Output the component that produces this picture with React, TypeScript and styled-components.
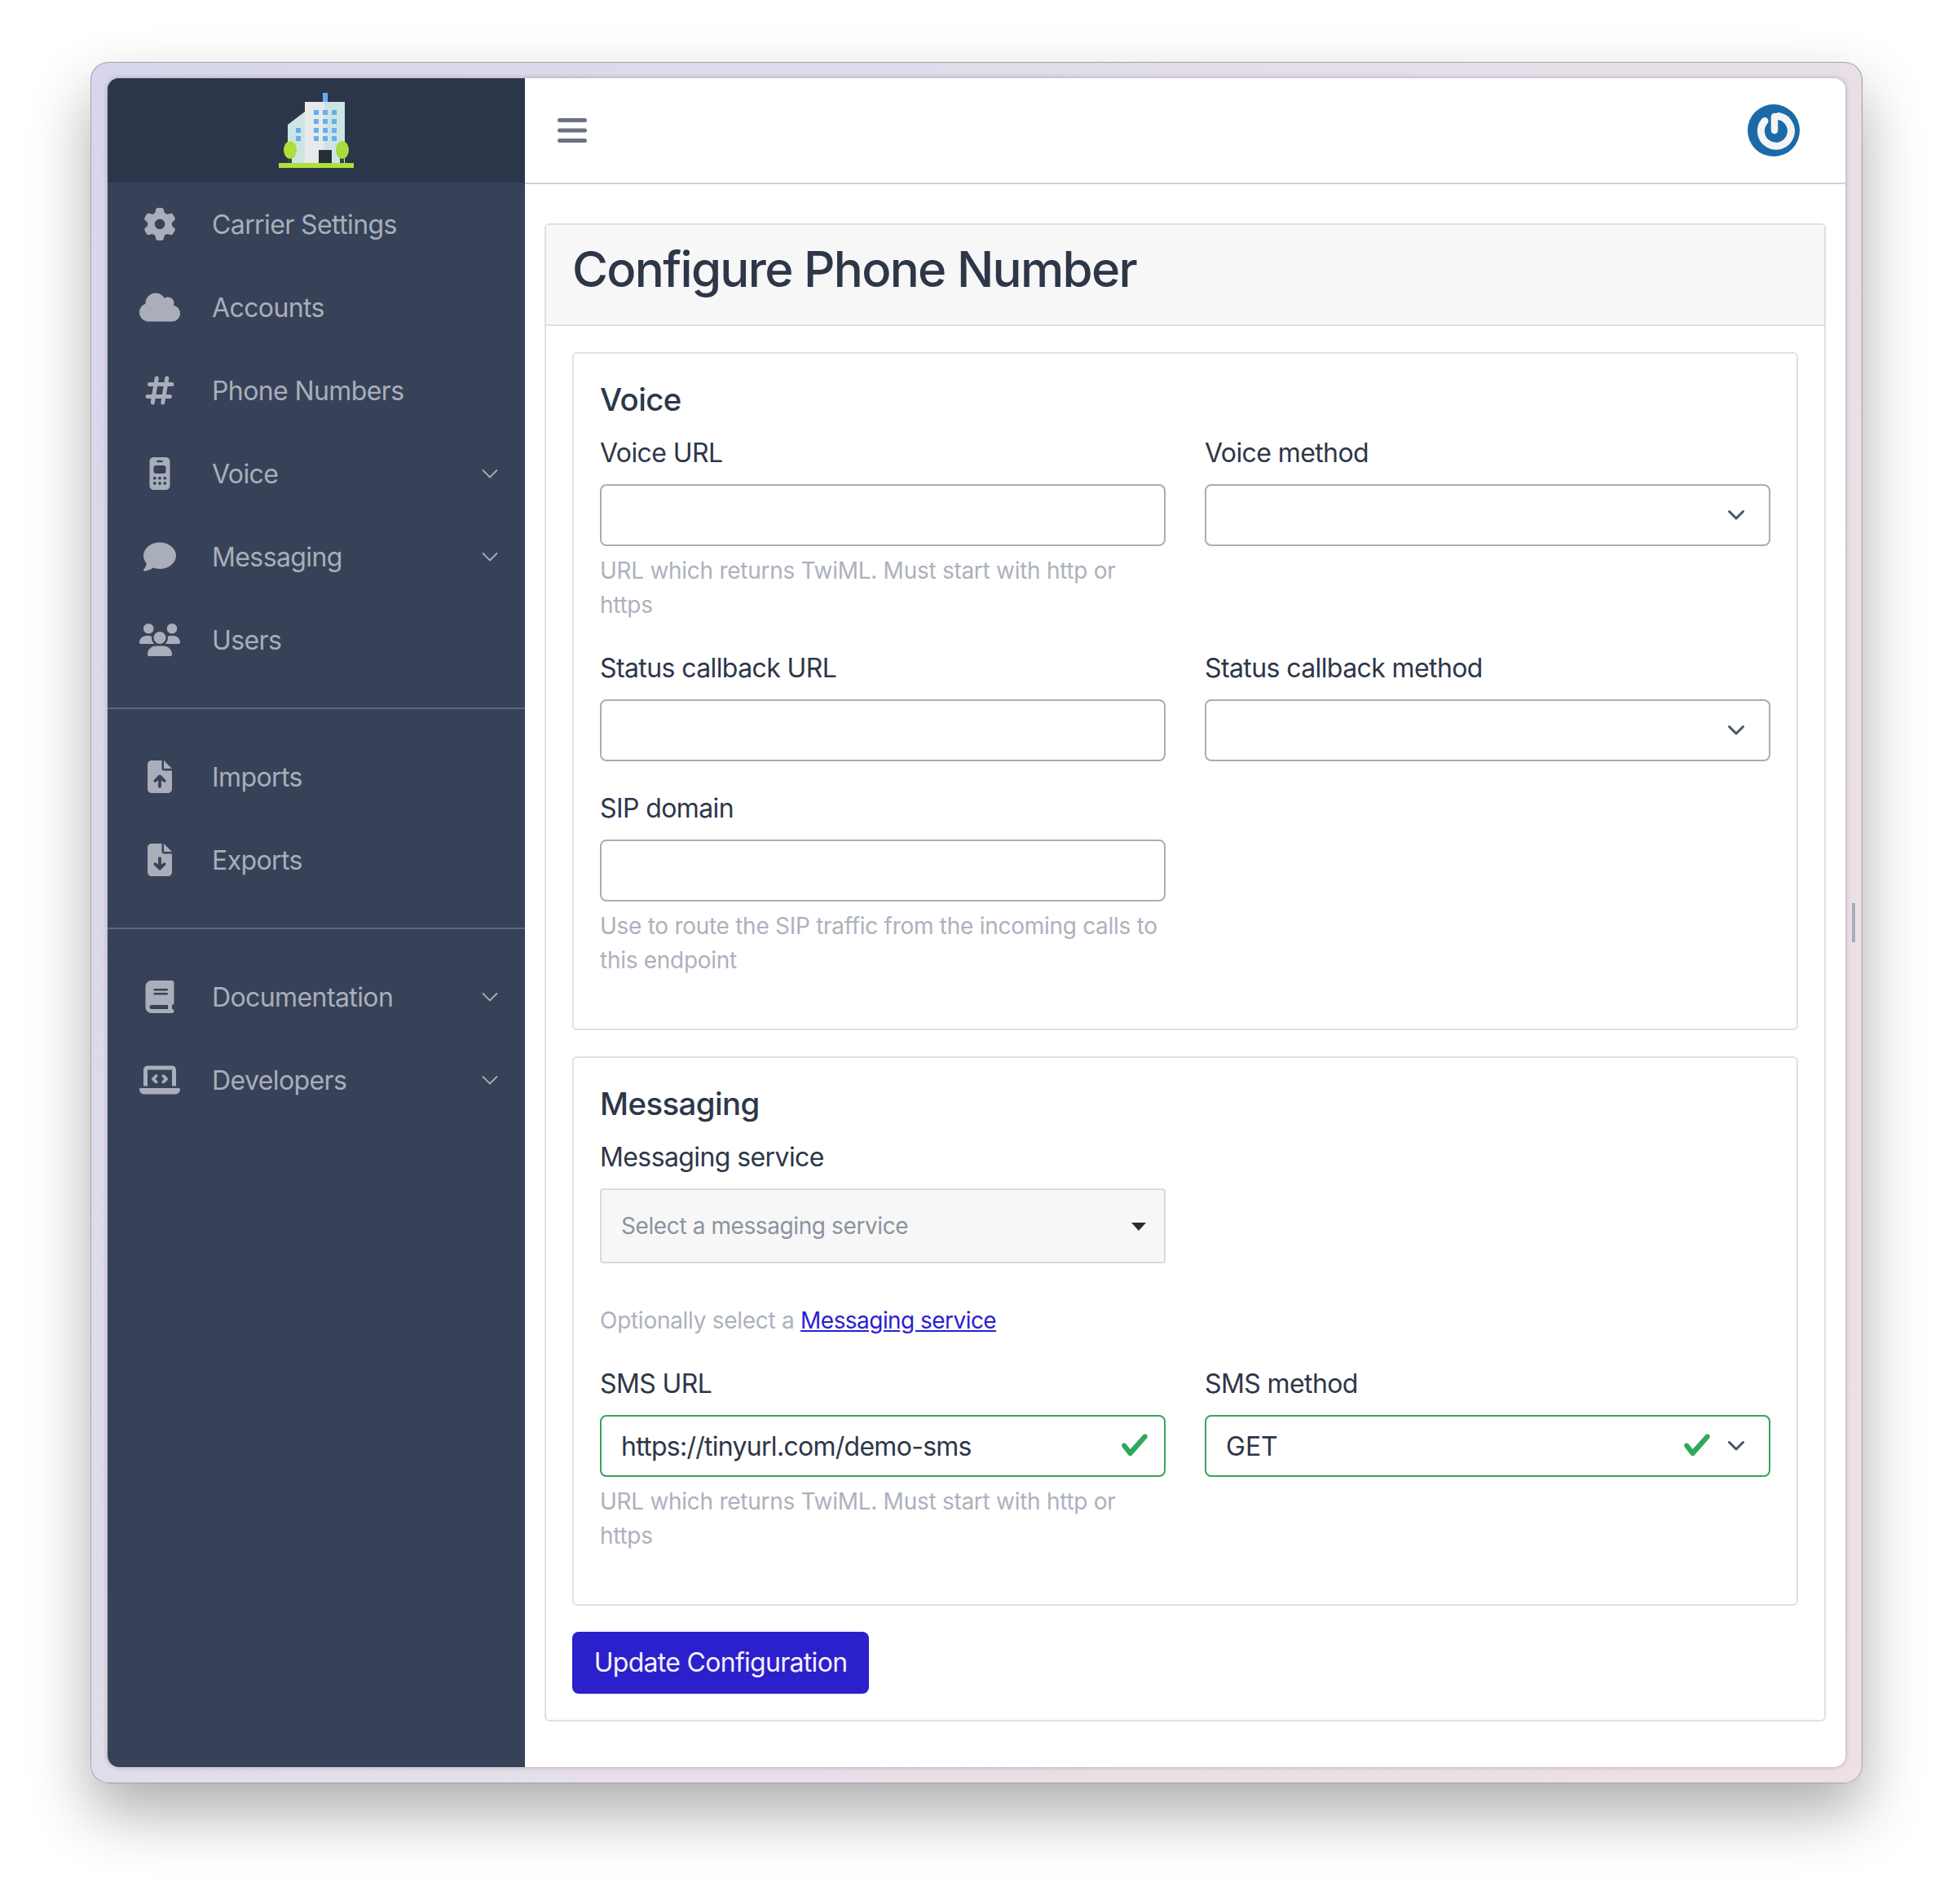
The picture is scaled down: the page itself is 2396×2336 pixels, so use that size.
import React from 'react'
import styled, { createGlobalStyle } from 'styled-components'
import {
  FaBook,
  FaCloud,
  FaComment,
  FaFileArrowDown,
  FaFileArrowUp,
  FaGear,
  FaHashtag,
  FaLaptopCode,
  FaMobileRetro,
  FaUsers
} from 'react-icons/fa6'

const GlobalStyle = createGlobalStyle`
  html, body {
    margin: 0;
    background: #fff;
  }
  * {
    box-sizing: border-box;
  }
`

const Page = styled.div`
  padding: 76px 111px 148px;
  font-family: Inter, 'Noto Sans', sans-serif;
  font-size: 32px;
  line-height: 48px;
  letter-spacing: -0.6px;
  color: #2d3748;
`
const Frame = styled.div`
  position: relative;
  padding: 19px 20px;
  height: 2112px;
  border-radius: 22px;
  border: 1px solid rgba(90, 90, 90, 0.45);
  background: linear-gradient(120deg, #d8d6ec 0%, #e5dfe9 50%, #efe0e3 100%);
  box-shadow: 0 36px 76px rgba(0, 0, 0, 0.32);
`
const ResizeHandle = styled.div`
  position: absolute;
  top: 1031px;
  right: 8px;
  width: 4px;
  height: 48px;
  background: #a9adb8;
`
const Shell = styled.div`
  display: flex;
  height: 2072px;
  border-radius: 14px;
  overflow: hidden;
  background: #fff;
  box-shadow: 0 0 6px rgba(0, 0, 0, 0.25);
`
const Sidebar = styled.aside`
  flex: 0 0 512px;
  background: #374258;
`
const Brand = styled.div`
  display: flex;
  align-items: center;
  justify-content: center;
  height: 128px;
  background: #2c364a;
`
const NavDivider = styled.div`
  height: 2px;
  margin: 32px 0;
  background: #5d6678;
`
const NavItem = styled.div`
  display: flex;
  align-items: center;
  height: 102px;
  padding: 0 33px 0 39px;
  color: #a9aeba;
`
const NavIcon = styled.span<{ $wide?: boolean }>`
  display: flex;
  flex: 0 0 50px;
  justify-content: center;
  margin-right: 39px;

  svg {
    width: ${props => (props.$wide ? '50px' : '40px')};
    height: 40px;
  }
`
const NavLabel = styled.span`
  flex: 1;
  padding-top: 2px;
`
const Main = styled.main`
  flex: 1;
  min-width: 0;
`
const TopBar = styled.header`
  display: flex;
  align-items: center;
  justify-content: space-between;
  height: 130px;
  padding: 0 56px 0 40px;
  border-bottom: 2px solid #cdd0d6;
`
const Content = styled.div`
  padding: 48px 24px 0;
`
const Card = styled.section`
  border: 2px solid #dfdfe4;
  border-radius: 6px;
`
const CardHeader = styled.div`
  height: 124px;
  padding: 0 32px;
  background: #f7f7f7;
  border-bottom: 2px solid #dfdfe4;
`
const Title = styled.h3`
  margin: 0;
  font-size: 60px;
  line-height: 108px;
  font-weight: 500;
  letter-spacing: -1.7px;
`
const CardBody = styled.div`
  padding: 32px;
`
const Section = styled.fieldset`
  margin: 0 0 32px;
  padding: 32px;
  border: 2px solid #dfdfe4;
  border-radius: 6px;
`
const SectionTitle = styled.h5`
  margin: 0 0 16px;
  font-size: 38.4px;
  line-height: 48px;
  font-weight: 500;
`
const FormRow = styled.div`
  display: grid;
  grid-template-columns: 1fr 1fr;
  column-gap: 48px;
`
const Group = styled.div`
  position: relative;
  margin-bottom: 32px;
`
const Label = styled.label`
  display: block;
  padding-top: 2px;
  margin-bottom: 14px;
`
const TextInput = styled.input<{ $valid?: boolean }>`
  display: block;
  width: 100%;
  height: 76px;
  padding: 1px 24px 0;
  border: 2px solid ${props => (props.$valid ? '#38a25f' : '#a9adb8')};
  border-radius: 8px;
  background: #fff;
  outline: none;
  font: inherit;
  letter-spacing: -0.72px;
  color: #2d3748;
`
const SelectInput = styled.select<{ $valid?: boolean }>`
  display: block;
  width: 100%;
  height: 76px;
  padding: 2px 24px 0;
  appearance: none;
  border: 2px solid ${props => (props.$valid ? '#38a25f' : '#a9adb8')};
  border-radius: 8px;
  background: #fff;
  outline: none;
  font: inherit;
  letter-spacing: 0;
  color: #2d3748;
`
const FieldBox = styled.div`
  position: relative;
`
const FieldChevron = styled.svg`
  position: absolute;
  top: 31px;
  right: 31px;
  width: 22px;
  height: 14px;
`
const FieldCheck = styled.svg<{ $right: number }>`
  position: absolute;
  top: 19px;
  right: ${props => props.$right}px;
  width: 36px;
  height: 36px;
`
const Help = styled.div`
  margin: 8px 0 -1px;
  padding-top: 1px;
  font-size: 28px;
  line-height: 42px;
  letter-spacing: -0.28px;
  color: #adb1be;
`
const HelpLink = styled.a`
  color: #2a1fd0;
  letter-spacing: -0.55px;
  text-decoration: underline;
`
const ComboBox = styled.div`
  position: relative;
  display: flex;
  align-items: center;
  height: 92px;
  margin-bottom: 48px;
  padding: 0 24px;
  border: 2px solid #dadadf;
  border-radius: 4px;
  background: #f7f7f7;
  font-size: 28px;
  letter-spacing: -0.4px;
  color: #8b939f;
`
const Caret = styled.span`
  position: absolute;
  top: 40px;
  right: 22px;
  border-top: 10px solid #263033;
  border-left: 9px solid transparent;
  border-right: 9px solid transparent;
`
const SubmitButton = styled.button`
  display: block;
  width: 364px;
  height: 76px;
  padding: 0;
  border: 0;
  border-radius: 8px;
  background: #2c1fcc;
  color: #f2f1fc;
  font: inherit;
  letter-spacing: -0.7px;
`

const Chevron = () => (
  <svg width='20' height='12' viewBox='0 0 20 12' fill='none' stroke='#a9aeba' strokeWidth='1.8'>
    <path d='M1 1.5l9 9 9-9' />
  </svg>
)

const SelectChevron = () => (
  <FieldChevron viewBox='0 0 22 14' fill='none' stroke='#4a5568' strokeWidth='3' strokeLinecap='round' strokeLinejoin='round'>
    <path d='M2.5 2.5L11 11l8.5-8.5' />
  </FieldChevron>
)

const Check = ({ right }: { right: number }) => (
  <FieldCheck $right={right} viewBox='0 0 8 8' fill='#30a85a'>
    <path d='M2.3 6.73L.6 4.53c-.4-1.04.46-1.4 1.1-.8l1.1 1.4 3.4-3.8c.6-.63 1.6-.27 1.2.7l-4 4.6c-.43.5-.8.4-1.1.1z' />
  </FieldCheck>
)

const Hamburger = () => (
  <svg width='36' height='36' viewBox='0 0 36 36' fill='#6b7280'>
    <rect x='0' y='3' width='36' height='5' rx='2.5' />
    <rect x='0' y='15.5' width='36' height='5' rx='2.5' />
    <rect x='0' y='28' width='36' height='5' rx='2.5' />
  </svg>
)

const PowerLogo = () => (
  <svg width='64' height='64' viewBox='0 0 64 64'>
    <circle cx='32' cy='32' r='32' fill='#1a6aa9' />
    <path
      d='M21 20.5A18.5 18.5 0 1 0 38 14.5'
      fill='none'
      stroke='#f4f4f6'
      strokeWidth='9'
      strokeLinecap='round'
    />
    <path d='M33 15v17' fill='none' stroke='#f4f4f6' strokeWidth='8.5' strokeLinecap='round' />
  </svg>
)

const buildingWindows = [
  [46, 24], [57, 24], [68, 24],
  [46, 35], [57, 35], [68, 35],
  [46, 46], [57, 46], [68, 46], [24, 46],
  [46, 56], [57, 56], [68, 56], [24, 56]
]

const BuildingLogo = () => (
  <svg width='92' height='92' viewBox='0 0 92 92'>
    <rect x='54' y='0' width='6' height='12' fill='#63b0ee' />
    <path d='M11 86V39l21-16V86z' fill='#cde4e4' />
    <rect x='32' y='11' width='49' height='75' fill='#cde4e4' />
    <rect x='32' y='11' width='24' height='75' fill='#e6eaea' />
    {buildingWindows.map(([x, y]) => (
      <rect key={`${x}-${y}`} x={x - 3} y={y - 3} width='6' height='6' fill='#68aeee' />
    ))}
    <rect x='49' y='70' width='16' height='17' fill='#262f38' />
    <rect x='11' y='80' width='5' height='8' fill='#3b3f44' />
    <rect x='75' y='80' width='5' height='8' fill='#3b3f44' />
    <ellipse cx='14' cy='70' rx='8' ry='11' fill='#aee03a' />
    <ellipse cx='78' cy='70' rx='8' ry='11' fill='#a8dc3c' />
    <rect x='0' y='86' width='92' height='6' fill='#aee03a' />
  </svg>
)

type NavEntry = { label: string; icon: React.ReactNode; wide?: boolean; more?: boolean }

const topNav: NavEntry[] = [
  { label: 'Carrier Settings', icon: <FaGear /> },
  { label: 'Accounts', icon: <FaCloud />, wide: true },
  { label: 'Phone Numbers', icon: <FaHashtag /> },
  { label: 'Voice', icon: <FaMobileRetro />, more: true },
  { label: 'Messaging', icon: <FaComment />, more: true },
  { label: 'Users', icon: <FaUsers />, wide: true }
]
const dataNav: NavEntry[] = [
  { label: 'Imports', icon: <FaFileArrowUp /> },
  { label: 'Exports', icon: <FaFileArrowDown /> }
]
const devNav: NavEntry[] = [
  { label: 'Documentation', icon: <FaBook />, more: true },
  { label: 'Developers', icon: <FaLaptopCode />, wide: true, more: true }
]

const NavList = ({ items }: { items: NavEntry[] }) => (
  <nav>
    {items.map(item => (
      <NavItem key={item.label}>
        <NavIcon $wide={item.wide}>{item.icon}</NavIcon>
        <NavLabel>{item.label}</NavLabel>
        {item.more && <Chevron />}
      </NavItem>
    ))}
  </nav>
)

const twimlHelp = 'URL which returns TwiML. Must start with http or https'

export default function App() {
  return (
    <Page>
      <GlobalStyle />
      <Frame>
        <ResizeHandle />
        <Shell>
          <Sidebar>
            <Brand>
              <BuildingLogo />
            </Brand>
            <NavList items={topNav} />
            <NavDivider />
            <NavList items={dataNav} />
            <NavDivider />
            <NavList items={devNav} />
          </Sidebar>
          <Main>
            <TopBar>
              <Hamburger />
              <PowerLogo />
            </TopBar>
            <Content>
              <Card>
                <CardHeader>
                  <Title>Configure Phone Number</Title>
                </CardHeader>
                <CardBody>
                  <Section>
                    <SectionTitle>Voice</SectionTitle>
                    <FormRow>
                      <Group>
                        <Label>Voice URL</Label>
                        <TextInput readOnly />
                        <Help>{twimlHelp}</Help>
                      </Group>
                      <Group>
                        <Label>Voice method</Label>
                        <FieldBox>
                          <SelectInput defaultValue=''>
                            <option value='' />
                          </SelectInput>
                          <SelectChevron />
                        </FieldBox>
                      </Group>
                    </FormRow>
                    <FormRow>
                      <Group>
                        <Label>Status callback URL</Label>
                        <TextInput readOnly />
                      </Group>
                      <Group>
                        <Label>Status callback method</Label>
                        <FieldBox>
                          <SelectInput defaultValue=''>
                            <option value='' />
                          </SelectInput>
                          <SelectChevron />
                        </FieldBox>
                      </Group>
                    </FormRow>
                    <FormRow>
                      <Group>
                        <Label>SIP domain</Label>
                        <TextInput readOnly />
                        <Help>Use to route the SIP traffic from the incoming calls to this endpoint</Help>
                      </Group>
                    </FormRow>
                  </Section>
                  <Section>
                    <SectionTitle>Messaging</SectionTitle>
                    <FormRow>
                      <Group>
                        <Label>Messaging service</Label>
                        <ComboBox>
                          Select a messaging service
                          <Caret />
                        </ComboBox>
                        <Help>
                          Optionally select a <HelpLink href='#'>Messaging service</HelpLink>
                        </Help>
                      </Group>
                    </FormRow>
                    <FormRow>
                      <Group>
                        <Label>SMS URL</Label>
                        <FieldBox>
                          <TextInput $valid readOnly defaultValue='https://tinyurl.com/demo-sms' />
                          <Check right={20} />
                        </FieldBox>
                        <Help>{twimlHelp}</Help>
                      </Group>
                      <Group>
                        <Label>SMS method</Label>
                        <FieldBox>
                          <SelectInput $valid defaultValue='GET'>
                            <option>GET</option>
                          </SelectInput>
                          <Check right={72} />
                          <SelectChevron />
                        </FieldBox>
                      </Group>
                    </FormRow>
                  </Section>
                  <SubmitButton>Update Configuration</SubmitButton>
                </CardBody>
              </Card>
            </Content>
          </Main>
        </Shell>
      </Frame>
    </Page>
  )
}
